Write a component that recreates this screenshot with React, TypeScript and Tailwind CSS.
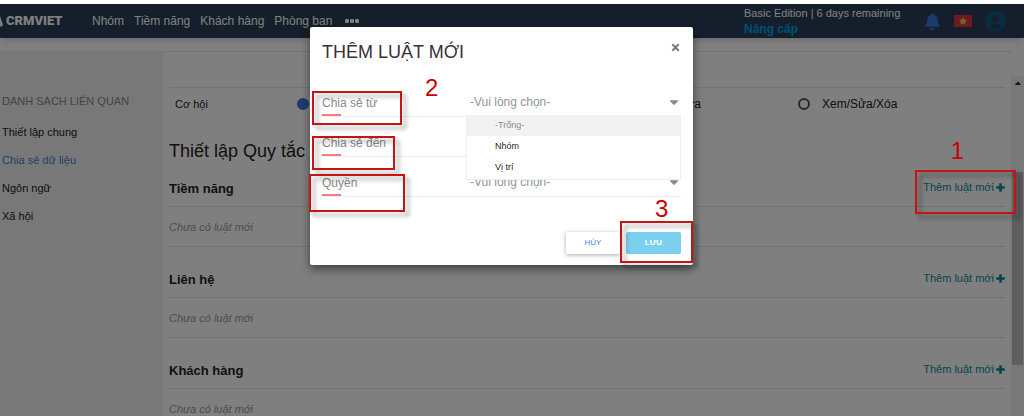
import React from "react";
import { FaBell, FaCaretDown, FaCaretUp, FaStar, FaTimes, FaUserCircle } from "react-icons/fa";

const navLinks = ["Nhóm", "Tiềm năng", "Khách hàng", "Phòng ban"];

const sideLinks = [
  { label: "Thiết lập chung", active: false },
  { label: "Chia sẻ dữ liệu", active: true },
  { label: "Ngôn ngữ", active: false },
  { label: "Xã hội", active: false },
];

const ruleGroups = ["Tiềm năng", "Liên hệ", "Khách hàng"];

const fields = [
  { id: "share-from", label: "Chia sẻ từ" },
  { id: "share-to", label: "Chia sẻ đến" },
  { id: "permission", label: "Quyền" },
];

const Callout: React.FC<{ className: string }> = ({ className }) => (
  <div
    aria-hidden="true"
    className={`pointer-events-none absolute z-20 border-2 border-[#c41414] drop-shadow-[4px_4px_2px_rgba(0,0,0,0.35)] ${className}`}
  />
);

const Step: React.FC<{ className: string; children: React.ReactNode }> = ({ className, children }) => (
  <span className={`absolute z-20 text-2xl leading-6 text-[#cc0000] ${className}`}>{children}</span>
);

const PlusIcon: React.FC = () => (
  <svg width="9" height="9" viewBox="0 0 9 9" fill="currentColor" aria-hidden="true">
    <path d="M3.2 0.2h2.6v3h3v2.6h-3v3H3.2v-3h-3V3.2h3z" />
  </svg>
);

const TopBar: React.FC = () => (
  <header className="flex h-[34px] items-center bg-[#283e56] text-white shadow-md">
    <a href="#" className="flex w-[92px] items-center overflow-hidden font-['Roboto'] text-[13px] leading-4 font-black">
      <svg width="3" height="12" viewBox="0 0 3 12" fill="currentColor" aria-hidden="true">
        <path d="M0 1 3 10 1 12 0 11Z" />
      </svg>
      <span className="ml-[3px]">CRMVIET</span>
    </a>
    <nav className="flex items-center gap-2.5 text-xs">
      {navLinks.map((label) => (
        <a key={label} href="#">
          {label}
        </a>
      ))}
      <button className="ml-[3px] flex gap-px" aria-label="Thêm">
        <i className="size-1 rounded-[1px] bg-white" />
        <i className="size-1 rounded-[1px] bg-white" />
        <i className="size-1 rounded-[1px] bg-white" />
      </button>
    </nav>
    <div className="ml-auto flex items-center pr-[18px]">
      <div className="w-[180px] text-[11px] leading-4">
        <p>Basic Edition | 6 days remaining</p>
        <a href="#" className="block text-xs leading-4 font-bold text-[#00a0e8]">
          Nâng cấp
        </a>
      </div>
      <button aria-label="Thông báo">
        <FaBell size={17} color="#3877dd" />
      </button>
      <button className="ml-[13px] flex h-3 w-[18px] items-center justify-center bg-[#da3340]" aria-label="Tiếng Việt">
        <FaStar size={8} color="#e8c84a" />
      </button>
      <button className="ml-[13px]" aria-label="Tài khoản">
        <FaUserCircle size={21} color="#0b5c84" />
      </button>
    </div>
  </header>
);

const Sidebar: React.FC = () => (
  <aside className="w-[163px] shrink-0 bg-[#f0f0f0] pt-[42px] pl-0.5">
    <h2 className="text-[11px] leading-4 whitespace-nowrap text-[#888]">DANH SÁCH LIÊN QUAN</h2>
    <ul className="mt-[15px] flex flex-col gap-3 text-[11px] leading-4">
      {sideLinks.map((link) => (
        <li key={link.label}>
          <a href="#" className={link.active ? "text-[#4a7fcb]" : "text-[#222]"}>
            {link.label}
          </a>
        </li>
      ))}
    </ul>
  </aside>
);

const radioClass = "size-3 shrink-0 appearance-none rounded-full border-2 border-[#555] checked:border-[#3f78e0] checked:bg-[#3f78e0]";

const Settings: React.FC = () => (
  <main className="min-w-0 flex-1 border-t border-[#e4e4e4] pt-[35px] pr-1.5 pl-1.5">
    <fieldset className="flex items-center border-t border-[#e4e4e4] pt-2 pl-1.5 text-xs leading-4 text-[#222]">
      <span className="w-[122px] text-[11px]">Cơ hội</span>
      <input type="radio" name="deals" defaultChecked aria-label="Riêng tư" className={radioClass} />
      <label className="mr-[97px] ml-auto flex items-center gap-3">
        <input type="radio" name="deals" className={radioClass} />
        Xem/Sửa
      </label>
      <label className="flex w-[207px] items-center gap-3">
        <input type="radio" name="deals" className={radioClass} />
        Xem/Sửa/Xóa
      </label>
    </fieldset>
    <h1 className="mt-[27px] text-lg leading-6 text-[#222]">Thiết lập Quy tắc</h1>
    <div className="-mt-[7px]">
      {ruleGroups.map((name) => (
        <section key={name}>
          <div className="flex h-[51px] items-end justify-between border-b border-[#e4e4e4] pb-[9px]">
            <h2 className="text-[13px] leading-4 font-bold text-[#222]">{name}</h2>
            <a href="#" className="flex items-center gap-0.5 pb-0.5 text-[11px] leading-4 text-[#0a8a96]">
              Thêm luật mới
              <PlusIcon />
            </a>
          </div>
          <p className="h-10 border-b border-[#e4e4e4] text-[11px] leading-10 text-[#999] italic">Chưa có luật mới</p>
        </section>
      ))}
    </div>
  </main>
);

const RuleDialog: React.FC = () => (
  <div role="dialog" aria-labelledby="rule-title" className="relative w-[383px] rounded-xs bg-white px-3 pb-[11px] shadow-[0_4px_10px_rgba(0,0,0,0.5)]">
    <div className="flex items-start justify-between pt-[13px]">
      <h2 id="rule-title" className="text-lg leading-6 text-[#333]">
        THÊM LUẬT MỚI
      </h2>
      <button aria-label="Đóng" className="mt-0.5">
        <FaTimes size={11} color="#777" />
      </button>
    </div>
    <form className="mt-[13px] text-xs text-[#8a8a8a]">
      {fields.map((field, index) => (
        <div key={field.id} className="relative flex h-10 items-end border-b border-[#ececec]">
          <label htmlFor={field.id} className="flex w-36 flex-col leading-4">
            {field.label}
            <span className="mt-[3px] h-0.5 w-[19px] bg-[#f77f7f]" />
          </label>
          <div className="relative flex-1 pb-1.5">
            <select id={field.id} className="w-full appearance-none pl-1 leading-4 text-[#8e959c]">
              <option>-Vui lòng chọn-</option>
            </select>
            <FaCaretDown size={14} className="pointer-events-none absolute top-px right-0" />
          </div>
          {index === 0 && (
            <ul role="listbox" className="absolute top-[38px] right-0 left-36 z-10 border border-t-0 border-[#eee] bg-white pb-px text-[9px] leading-[21px] text-[#222]">
              <li role="option" className="bg-[#f2f2f2] pl-7 text-[#8a8a8a]">
                -Trống-
              </li>
              <li role="option" className="pl-7">
                Nhóm
              </li>
              <li role="option" className="pl-7">
                Vị trí
              </li>
            </ul>
          )}
        </div>
      ))}
      <div className="mt-[35px] flex justify-end gap-1.5 text-[8px]">
        <button type="button" className="h-[22px] w-[54px] rounded-xs bg-white text-[#4a7fe8] shadow-[0_1px_4px_rgba(0,0,0,0.35)]">
          HỦY
        </button>
        <button type="button" className="h-[22px] w-[55px] rounded-xs bg-[#7bcfef] font-bold text-white">
          LƯU
        </button>
      </div>
    </form>
    <Callout className="top-16 left-0.5 h-[34px] w-[90px]" />
    <Callout className="top-[109px] left-0.5 h-[34px] w-[83px]" />
    <Callout className="top-[147px] -left-px h-[38px] w-24" />
    <Callout className="top-[194px] right-0 h-[42px] w-[73px]" />
    <Step className="top-[49px] left-[115px]">2</Step>
    <Step className="top-[170px] left-[345px]">3</Step>
  </div>
);

const App: React.FC = () => (
  <div className="relative h-screen overflow-hidden bg-white pt-1 font-['Liberation_Sans',Arial,sans-serif]">
    <TopBar />
    <div className="flex h-full pt-[13px]">
      <Sidebar />
      <Settings />
      <div aria-hidden="true" className="mt-[25px] flex w-[13px] shrink-0 flex-col items-center bg-[#f0f0f0] text-[#333]">
        <FaCaretUp size={10} className="mt-0.5" />
        <div className="mt-[84px] h-[193px] w-[11px] bg-[#bcbcbc]" />
      </div>
    </div>
    <div className="absolute inset-x-0 top-1 bottom-0 flex items-start justify-center bg-black/50 pt-[23px] pr-[21px]">
      <RuleDialog />
    </div>
    <Callout className="top-[170px] right-2 h-11 w-[101px]" />
    <Step className="top-[139px] right-[60px]">1</Step>
  </div>
);

export default App;
